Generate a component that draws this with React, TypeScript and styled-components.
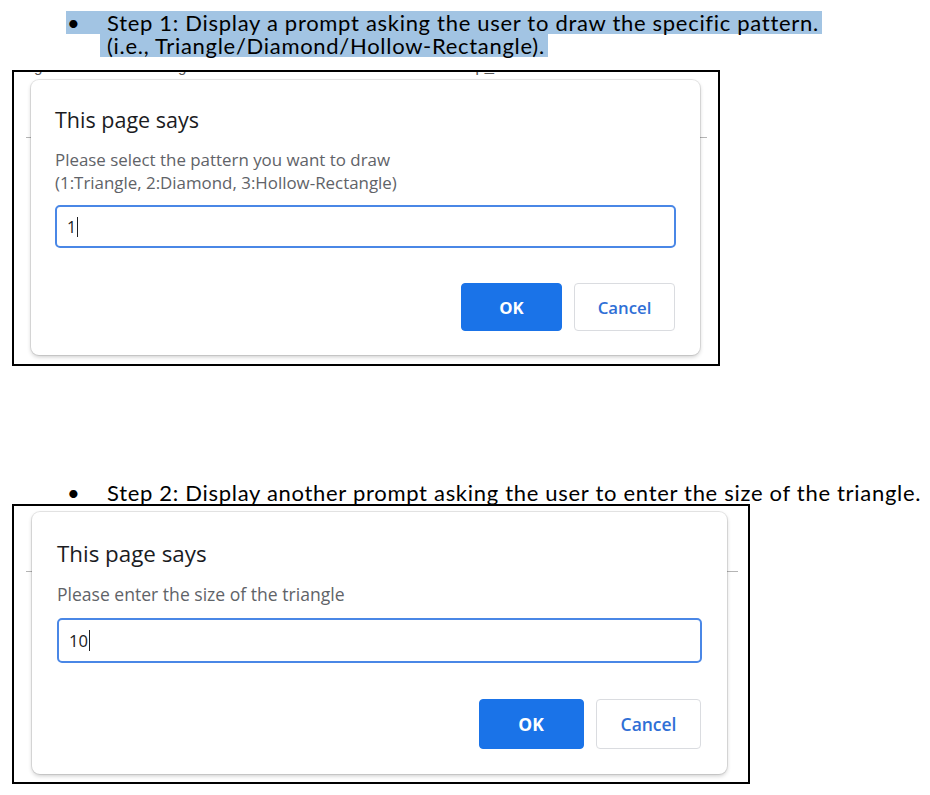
import styled, { createGlobalStyle } from "styled-components";

const GlobalStyle = createGlobalStyle`
  html, body {
    margin: 0;
    padding: 0;
    background: #fff;
  }
  body {
    font-family: "Open Sans", "Noto Sans", sans-serif;
  }
`;

const Page = styled.div`
  width: 930px;
  height: 795px;
  overflow: hidden;
  padding-top: 11px;
  box-sizing: border-box;
`;

const Item = styled.div<{ $mt?: number }>`
  margin-top: ${(p) => p.$mt ?? 0}px;
  font-family: Lato, "Liberation Sans", sans-serif;
  font-size: 22px;
  letter-spacing: 0.7px;
  color: #000;
`;

const Row = styled.div<{ $hl?: boolean; $left: number; $pad?: number }>`
  display: flex;
  align-items: center;
  width: fit-content;
  height: 23px;
  margin-left: ${(p) => p.$left}px;
  padding: 0 3px 0 ${(p) => p.$pad ?? 0}px;
  background: ${(p) => (p.$hl ? "#a2c4e3" : "transparent")};
  white-space: nowrap;
`;

const Bullet = styled.span`
  width: 41px;
  padding-left: 1px;
  box-sizing: border-box;
  font-size: 22px;
  letter-spacing: 0;
`;

const Frame = styled.div<{ $w: number; $h: number; $mt: number; $pad: number; $rule: number }>`
  margin: ${(p) => p.$mt}px 0 0 12px;
  width: ${(p) => p.$w}px;
  height: ${(p) => p.$h}px;
  box-sizing: border-box;
  border: 2px solid #000;
  padding-left: ${(p) => p.$pad}px;
  background: linear-gradient(#b5b5b5, #b5b5b5) no-repeat 12px 65px / ${(p) => p.$rule}px 1px;
`;

// bottoms of the page text that sits behind the prompt
const Ghost = styled.div<{ $h: number }>`
  height: ${(p) => p.$h}px;
  margin-left: -17px;
  overflow: hidden;
  font-family: "Liberation Mono", monospace;
  font-size: 16px;
  line-height: 16px;
  color: #555;
  white-space: pre;

  span {
    display: block;
    margin-top: -12px;
  }
`;

const Dialog = styled.div<{ $w: number; $s: number }>`
  width: ${(p) => p.$w}px;
  box-sizing: border-box;
  padding: ${(p) => 26 * p.$s}px ${(p) => 24 * p.$s}px ${(p) => 24 * p.$s}px;
  background: #fff;
  border-radius: 8px;
  box-shadow: 0 0 0 1px rgba(0, 0, 0, 0.09), 0 2px 4px rgba(0, 0, 0, 0.2);
`;

const Title = styled.div<{ $s: number }>`
  font-size: ${(p) => 21.5 * p.$s}px;
  font-weight: 500;
  line-height: ${(p) => 28 * p.$s}px;
  color: #1b1c1f;
  margin-bottom: ${(p) => 14 * p.$s}px;
`;

const Message = styled.div<{ $s: number }>`
  font-size: ${(p) => 16.9 * p.$s}px;
  line-height: ${(p) => 23 * p.$s}px;
  color: #5f6368;
  margin-bottom: ${(p) => 11 * p.$s}px;
`;

const Field = styled.div<{ $s: number }>`
  display: flex;
  align-items: center;
  height: ${(p) => 43 * p.$s}px;
  box-sizing: border-box;
  border: 2px solid #4a87e6;
  border-radius: 5px;
  padding-left: 10px;
  font-size: ${(p) => 16 * p.$s}px;
  color: #202124;
`;

const Caret = styled.span<{ $s: number }>`
  display: inline-block;
  width: 1px;
  height: ${(p) => 20 * p.$s}px;
  margin-left: 1px;
  background: #202124;
`;

const Actions = styled.div<{ $s: number }>`
  display: flex;
  justify-content: flex-end;
  gap: ${(p) => 12 * p.$s}px;
  margin-top: ${(p) => 35 * p.$s}px;
  padding-right: 1px;
`;

const Button = styled.button<{ $s: number; $primary?: boolean }>`
  width: ${(p) => 101 * p.$s}px;
  height: ${(p) => 48 * p.$s}px;
  border-radius: 4px;
  font-family: "Open Sans", sans-serif;
  font-size: ${(p) => 16.8 * p.$s}px;
  font-weight: ${(p) => (p.$primary ? 700 : 600)};
  border: 1px solid ${(p) => (p.$primary ? "#1a73e8" : "#dadce0")};
  background: ${(p) => (p.$primary ? "#1a73e8" : "#fff")};
  color: ${(p) => (p.$primary ? "#fff" : "#2f6fd6")};
  padding: 0;
`;

type PromptProps = {
  width: number;
  scale: number;
  lines: string[];
  value: string;
};

const Prompt = ({ width, scale, lines, value }: PromptProps) => (
  <Dialog $w={width} $s={scale}>
    <Title $s={scale}>This page says</Title>
    <Message $s={scale}>
      {lines.map((l) => (
        <div key={l}>{l}</div>
      ))}
    </Message>
    <Field $s={scale}>
      {value}
      <Caret $s={scale} />
    </Field>
    <Actions $s={scale}>
      <Button $s={scale} $primary>
        OK
      </Button>
      <Button $s={scale}>Cancel</Button>
    </Actions>
  </Dialog>
);

export default function App() {
  return (
    <>
      <GlobalStyle />
      <Page>
        <Item>
          <Row $hl $left={66}>
            <Bullet>•</Bullet>
            Step 1: Display a prompt asking the user to draw the specific pattern.
          </Row>
          <Row $hl $left={100} $pad={7}>
            (i.e., Triangle/Diamond/Hollow-Rectangle).
          </Row>
        </Item>

        <Frame $mt={13} $w={708} $h={296} $pad={17} $rule={681}>
          <Ghost $h={8}>
            <span>{"  g        /     g        /         /           p_      /"}</span>
          </Ghost>
          <Prompt
            width={669}
            scale={1}
            lines={[
              "Please select the pattern you want to draw",
              "(1:Triangle, 2:Diamond, 3:Hollow-Rectangle)",
            ]}
            value="1"
          />
        </Frame>

        <Item $mt={115}>
          <Row $left={66}>
            <Bullet>•</Bullet>
            Step 2: Display another prompt asking the user to enter the size of the triangle.
          </Row>
        </Item>

        <Frame $mt={0} $w={738} $h={280} $pad={18} $rule={712}>
          <Ghost $h={6} />
          <Prompt
            width={695}
            scale={1.04}
            lines={["Please enter the size of the triangle"]}
            value="10"
          />
        </Frame>
      </Page>
    </>
  );
}
